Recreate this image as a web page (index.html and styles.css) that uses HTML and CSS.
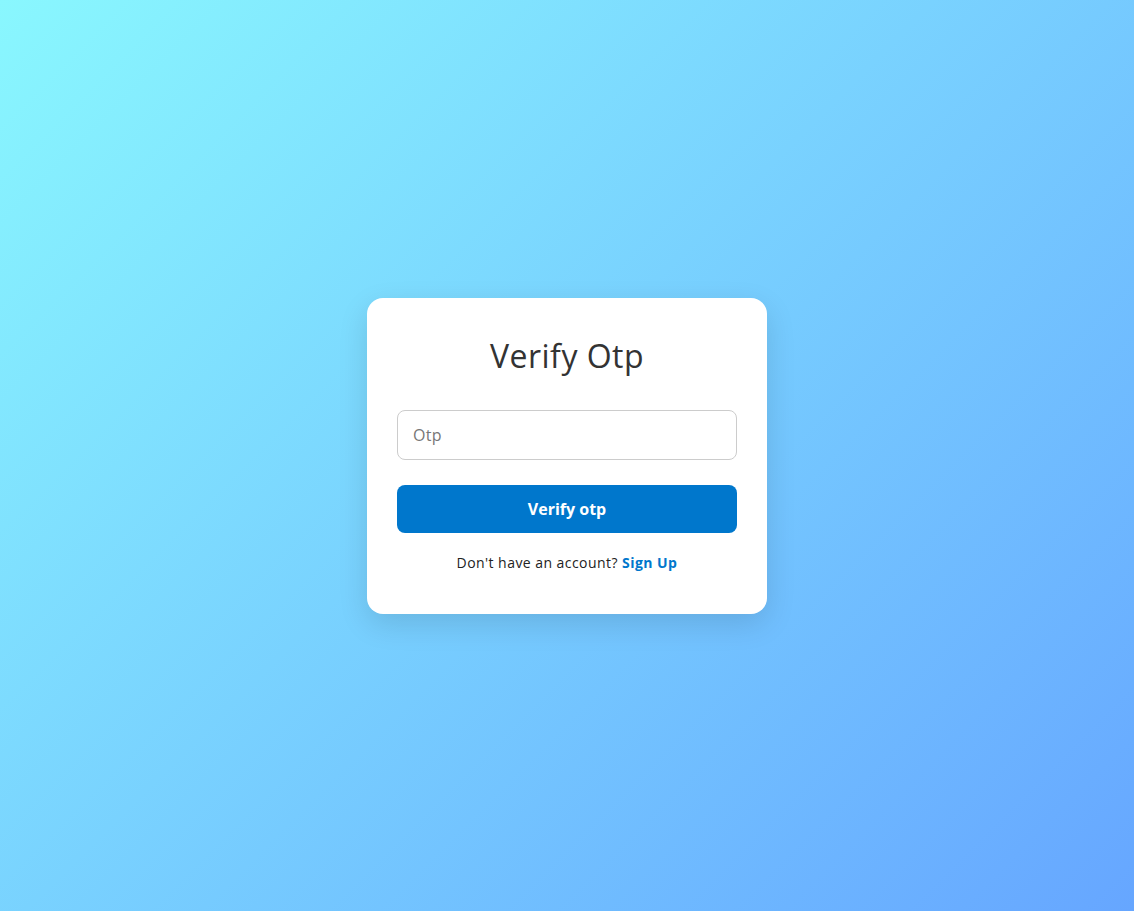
FILE: index.html
```html
<!DOCTYPE html>
<html lang="en">
<head>
<meta charset="utf-8">
<title>Verify Otp</title>
<link rel="stylesheet" href="styles.css">
</head>
<body>
<main class="page">
  <form class="card">
    <h2 class="title">Verify Otp</h2>
    <input class="field" type="text" placeholder="Otp">
    <button class="btn" type="button">Verify otp</button>
    <p class="foot">Don't have an account? <a class="link" href="#">Sign Up</a></p>
  </form>
</main>
</body>
</html>
```
FILE: styles.css
```css
* { box-sizing: border-box; }
html, body { margin: 0; height: 100%; }
body {
  font-family: "Open Sans", "DejaVu Sans", sans-serif;
  background: linear-gradient(135deg, #89f7fe 0%, #66a6ff 100%);
  min-height: 911px;
}
.page {
  min-height: 911px;
  display: flex;
  align-items: center;
  justify-content: center;
}
.card {
  width: 400px;
  height: 316px;
  background: #fff;
  border-radius: 16px;
  padding: 30px 30px 0;
  display: flex;
  flex-direction: column;
  box-shadow: 0 10px 30px rgba(0, 0, 0, 0.12);
}
.title {
  margin: 0 0 26px;
  font-size: 32px;
  font-weight: 400;
  line-height: 56px;
  letter-spacing: 0.5px;
  text-align: center;
  color: #333;
}
.field {
  height: 50px;
  border: 1px solid #ccc;
  border-radius: 8px;
  padding: 0 15px;
  font-family: inherit;
  font-size: 16px;
  letter-spacing: 0.3px;
  color: #333;
  margin: 0 0 25px;
  outline: none;
}
.field::placeholder { color: #777; }
.btn {
  height: 48px;
  border: 0;
  border-radius: 8px;
  background: #0077cc;
  color: #fff;
  font-family: inherit;
  font-size: 16px;
  font-weight: 700;
  cursor: pointer;
}
.foot {
  margin: 19px 0 0;
  text-align: center;
  font-size: 14px;
  line-height: 21px;
  letter-spacing: 0.45px;
  color: #222;
}
.link {
  color: #0077cc;
  font-weight: 700;
  text-decoration: none;
}
```
